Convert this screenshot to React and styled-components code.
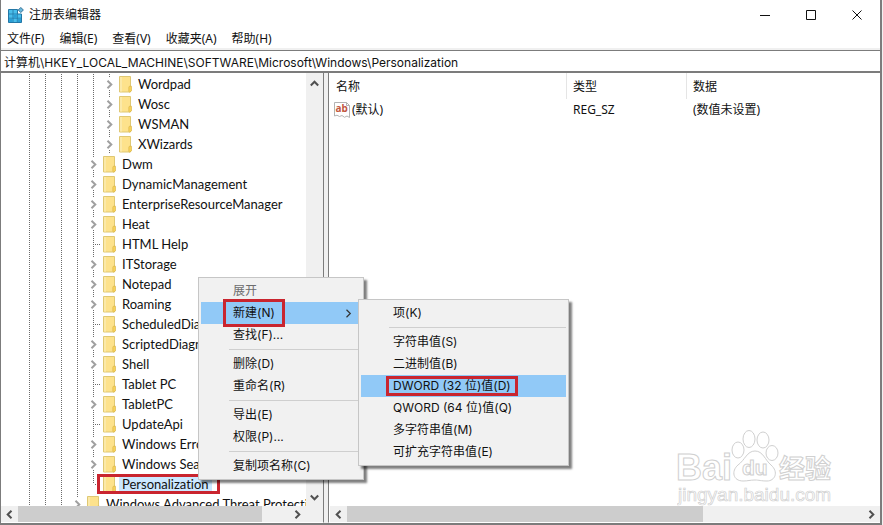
import React from 'react';
import styled, { createGlobalStyle, css } from 'styled-components';

const GlobalStyle = createGlobalStyle`
    * {
        box-sizing: border-box;
    }
    body {
        margin: 0;
        background: #f0f0f0;
        color: #111;
        font-family: 'Noto Sans', 'Noto Sans CJK SC', sans-serif;
        font-size: 12px;
        line-height: 20px;
    }
    button, input {
        font: inherit;
        color: inherit;
        border: 0;
        padding: 0;
        background: none;
    }
`;

const dots = css`
    background: repeating-linear-gradient(#6a6a6a 0 1px, transparent 1px 2px);
`;

const Window = styled.div`
    position: relative;
    display: flex;
    flex-direction: column;
    height: 100vh;
    margin-right: 1px;
    background: #fff;
    border: solid #7c7c7c;
    border-width: 0 2px 2px 1px;
    overflow: hidden;
`;

const TitleBar = styled.header`
    display: flex;
    align-items: center;
    height: 29px;
    padding-left: 7px;
`;

const Title = styled.h1`
    flex: 1;
    margin: 0 0 0 5px;
    font-size: 12px;
    font-weight: 400;
`;

const CaptionButton = styled.button`
    display: flex;
    align-items: center;
    justify-content: center;
    width: 46px;
    height: 29px;
`;

const MenuBar = styled.nav`
    display: flex;
    gap: 15px;
    height: 21px;
    padding-left: 6px;
    border-bottom: 2px solid #f0f0f0;
`;

const MenuBarItem = styled.button`
    line-height: 20px;
    height: 20px;
    white-space: nowrap;
`;

const Address = styled.input`
    flex: none;
    width: 100%;
    height: 23px;
    padding: 0 3px;
    border: solid #7c7c7c;
    border-width: 1px 0 2px;
    outline: none;
    font-family: 'Inter', 'Noto Sans CJK SC', sans-serif;
`;

const Panes = styled.main`
    display: flex;
    flex: 1;
    gap: 4px;
    min-height: 0;
    background: #f0f0f0;
`;

const Pane = styled.section`
    display: flex;
    flex-direction: column;
    background: #fff;
    border-bottom: 1px solid #fff;
    min-height: 0;
    min-width: 0;
`;

const TreePane = styled(Pane)`
    flex: 0 0 323px;
    border-right: 1px solid #7c7c7c;
`;

const ValuePane = styled(Pane)`
    flex: 1;
    border-left: 1px solid #7c7c7c;
    padding-left: 1px;
`;

const TreeArea = styled.div`
    display: flex;
    flex: 1;
    min-height: 0;
`;

const Tree = styled.ul`
    flex: 1;
    margin: 0;
    padding: 1px 0 0 20px;
    list-style: none;
    overflow: hidden;
`;

const TreeRow = styled.li`
    display: flex;
    height: 20px;
    white-space: nowrap;
`;

const Guide = styled.span`
    flex: none;
    width: 16px;
    height: 20px;
    &::before {
        content: '';
        display: block;
        width: 1px;
        height: 100%;
        margin-left: 8px;
        ${dots}
    }
`;

const Branch = styled.span`
    display: flex;
    flex: none;
    align-items: center;
    width: 16px;
    height: 20px;
    &::before {
        content: '';
        width: 1px;
        height: ${(p) => (p.$last ? '10px' : '20px')};
        margin-left: 8px;
        align-self: flex-start;
        ${dots}
    }
    &::after {
        content: '';
        flex: 1;
        height: 1px;
        background: repeating-linear-gradient(90deg, transparent 0 1px, #6a6a6a 1px 2px);
    }
`;

const Expander = styled.button`
    display: flex;
    flex: none;
    flex-direction: column;
    align-items: center;
    justify-content: space-between;
    width: 16px;
    height: 20px;
    &::before,
    &::after {
        content: '';
        width: 1px;
        height: 4px;
        ${dots}
    }
`;

const FolderSlot = styled.span`
    display: flex;
    flex: none;
    align-items: center;
    width: 17px;
    padding-left: 2px;
`;

const TreeLabel = styled.span`
    padding: 0 3px;
    margin-left: 1px;
    font-family: 'Lato', sans-serif;
    font-size: 13px;
    font-variant-ligatures: none;
    background: ${(p) => (p.$selected ? '#cce8ff' : 'transparent')};
`;

const Marked = styled.span`
    position: relative;
    display: flex;
    &::after {
        content: '';
        position: absolute;
        inset: ${(p) => p.$inset};
        border: 3px solid #c9252f;
        pointer-events: none;
    }
`;

const ScrollColumn = styled.div`
    display: flex;
    flex: 0 0 17px;
    flex-direction: column;
    justify-content: space-between;
    padding: 2px 0 1px;
    background: #f0f0f0;
`;

const ScrollRow = styled.div`
    display: flex;
    flex: none;
    height: 16px;
    background: #f0f0f0;
    padding-right: ${(p) => (p.$corner ? '17px' : '0')};
`;

const ScrollTrack = styled.div`
    flex: 1;
`;

const ScrollThumb = styled.div`
    width: ${(p) => p.$size};
    height: 100%;
    background: #cdcdcd;
`;

const ScrollButton = styled.button`
    display: flex;
    flex: none;
    align-items: center;
    justify-content: center;
    width: 17px;
    height: 16px;
`;

const ValueArea = styled.div`
    flex: 1;
    min-height: 0;
`;

const ValueTable = styled.table`
    width: 100%;
    table-layout: fixed;
    border-collapse: separate;
    border-spacing: 0;
`;

const Th = styled.th`
    width: ${(p) => p.$width || 'auto'};
    height: 26px;
    padding: 2px 6px 0;
    font-weight: 400;
    text-align: left;
    border-right: ${(p) => (p.$width ? '1px solid #e5e5e5' : '0')};
`;

const Td = styled.td`
    height: 22px;
    padding: 0 6px;
`;

const ValueName = styled.span`
    display: flex;
    align-items: center;
    gap: 2px;
    margin-left: -2px;
`;

const Popup = styled.ul`
    position: absolute;
    left: ${(p) => p.$left};
    top: ${(p) => p.$top};
    z-index: 1;
    width: max-content;
    min-width: ${(p) => p.$width};
    margin: 0;
    padding: 2px;
    list-style: none;
    background: #f1f1f1;
    border: 1px solid #c6c6c6;
    box-shadow: 3px 3px 2px rgba(0, 0, 0, 0.5);
    font-family: 'Inter', 'Noto Sans CJK SC', sans-serif;
`;

const PopupItem = styled.li`
    position: relative;
`;

const PopupButton = styled.button`
    display: flex;
    align-items: center;
    justify-content: space-between;
    width: 100%;
    height: 22px;
    padding: 0 8px 0 32px;
    background: ${(p) => (p.$active ? '#91c9f7' : 'transparent')};
    &:disabled {
        color: #6d6d6d;
    }
`;

const Divider = styled.li`
    height: 1px;
    margin: 3px 0 3px 28px;
    background: #cfcfcf;
`;

const Watermark = styled.svg`
    position: absolute;
    right: 41px;
    bottom: 14px;
    pointer-events: none;
`;

const Chevron = ({ dir = 'right', color = '#505050', size = 9, weight = 2 }) => {
    const turn = { right: 0, down: 90, left: 180, up: 270 }[dir];
    return (
        <svg width={size} height={size} viewBox="0 0 9 9" fill="none" aria-hidden="true">
            <path d="M2.5 0.8 L6.3 4.5 L2.5 8.2" stroke={color} strokeWidth={weight} transform={`rotate(${turn} 4.5 4.5)`} />
        </svg>
    );
};

const FolderIcon = () => (
    <svg width="14" height="17" viewBox="0 0 14 17" aria-hidden="true">
        <path d="M0.5 0.5 H11.5 V16 H0.5 Z" fill="#fde28c" stroke="#dfc873" />
        <path d="M1 1 H3 V15.5 H1 Z" fill="#fbe9a8" />
        <path d="M9.9 15.6 V11.2 Q9.9 10.2 11 10.2 H12.4 V15 L10.6 16 Z" fill="#fbd75c" stroke="#dcb84e" strokeWidth="0.8" />
    </svg>
);

const AppIcon = () => (
    <svg width="16" height="16" viewBox="0 0 16 16" aria-hidden="true">
        <path d="M0.5 2.5 H9.5 V7 H13.5 V15.5 H0.5 Z" fill="#48bdea" stroke="#2377a6" />
        <path d="M1 7 H9.5 M1 11.2 H13 M5 3 V15 M9.3 7 V15" stroke="#2377a6" strokeWidth="0.8" />
        <path d="M1.2 11.8 H4.4 V15 H1.2 Z M5.6 7.6 H8.8 V10.7 H5.6 Z M9.9 11.8 H13 V15 H9.9 Z" fill="#2a9fd6" />
        <path d="M12.8 0.5 L15.4 3 L12.8 5.5 L10.2 3 Z" fill="#6bb9dc" stroke="#39759a" />
    </svg>
);

const StringIcon = () => (
    <svg width="16" height="16" viewBox="0 0 16 16" aria-hidden="true">
        <path d="M0.5 0.5 H12.5 L15.5 3.5 V15.5 L13 14 L10.5 15.3 L8 13.5 L5.5 14.5 L3 13.2 L0.5 14 Z" fill="#fff" stroke="#b3b3b3" />
        <path d="M12.5 0.5 V3.5 H15.5" fill="none" stroke="#b3b3b3" />
        <text x="1.6" y="10.4" fontSize="10" fontWeight="700" fontFamily="Noto Sans, sans-serif" fill="#c2583f">ab</text>
    </svg>
);

const tree = [
    { name: 'Wordpad', depth: 5, open: true },
    { name: 'Wosc', depth: 5, open: true },
    { name: 'WSMAN', depth: 5, open: true },
    { name: 'XWizards', depth: 5, open: true },
    { name: 'Dwm', depth: 4, open: true },
    { name: 'DynamicManagement', depth: 4, open: true },
    { name: 'EnterpriseResourceManager', depth: 4, open: true },
    { name: 'Heat', depth: 4, open: true },
    { name: 'HTML Help', depth: 4 },
    { name: 'ITStorage', depth: 4, open: true },
    { name: 'Notepad', depth: 4, open: true },
    { name: 'Roaming', depth: 4, open: true },
    { name: 'ScheduledDiagnostics', depth: 4 },
    { name: 'ScriptedDiagnostics', depth: 4, open: true },
    { name: 'Shell', depth: 4, open: true },
    { name: 'Tablet PC', depth: 4 },
    { name: 'TabletPC', depth: 4, open: true },
    { name: 'UpdateApi', depth: 4 },
    { name: 'Windows Error Reporting', depth: 4, open: true },
    { name: 'Windows Search', depth: 4, open: true },
    { name: 'Personalization', depth: 4, selected: true },
    { name: 'Windows Advanced Threat Protection', depth: 3, open: true },
];

const newItems = ['项(K)', null, '字符串值(S)', '二进制值(B)', 'DWORD (32 位)值(D)', 'QWORD (64 位)值(Q)', '多字符串值(M)', '可扩充字符串值(E)'];

const keyItems = ['展开', '新建(N)', '查找(F)...', null, '删除(D)', '重命名(R)', null, '导出(E)', '权限(P)...', null, '复制项名称(C)'];

const TreeNode = ({ node }) => {
    const body = (
        <>
            <FolderSlot>
                <FolderIcon />
            </FolderSlot>
            <TreeLabel $selected={node.selected}>{node.name}</TreeLabel>
        </>
    );
    return (
        <TreeRow>
            {Array.from({ length: node.depth }, (_, i) => (
                <Guide key={i} />
            ))}
            {node.open ? (
                <Expander aria-label={node.name}>
                    <Chevron color="#a0a0a0" />
                </Expander>
            ) : (
                <Branch $last={node.selected} />
            )}
            {node.selected ? <Marked $inset="0 -8px 0 -4px">{body}</Marked> : body}
        </TreeRow>
    );
};

const NewMenu = () => (
    <Popup $left="157px" $top="-3px" $width="211px">
        {newItems.map((label, i) =>
            label ? (
                <PopupItem key={i}>
                    <PopupButton $active={i === 4}>{i === 4 ? <Marked $inset="0 -7px">{label}</Marked> : label}</PopupButton>
                </PopupItem>
            ) : (
                <Divider key={i} />
            )
        )}
    </Popup>
);

const KeyMenu = () => (
    <Popup $left="197px" $top="277px" $width="166px">
        {keyItems.map((label, i) =>
            label ? (
                <PopupItem key={i}>
                    <PopupButton $active={i === 1} disabled={i === 0}>
                        {i === 1 ? <Marked $inset="-4px -10px">{label}</Marked> : label}
                        {i === 1 && <Chevron color="#333" weight={1.2} />}
                    </PopupButton>
                    {i === 1 && <NewMenu />}
                </PopupItem>
            ) : (
                <Divider key={i} />
            )
        )}
    </Popup>
);

const HorizontalScroll = ({ size, corner }) => (
    <ScrollRow $corner={corner}>
        <ScrollButton aria-label="向左">
            <Chevron dir="left" />
        </ScrollButton>
        <ScrollTrack>
            <ScrollThumb $size={size} />
        </ScrollTrack>
        <ScrollButton aria-label="向右">
            <Chevron />
        </ScrollButton>
    </ScrollRow>
);

const BaiduMark = () => (
    <Watermark width="162" height="80" viewBox="0 0 162 80" fill="#fff" stroke="#d0d0d0" fontFamily="Liberation Sans, Noto Sans CJK SC, sans-serif">
        <text x="-1" y="51" fontSize="36" fontWeight="700">Bai</text>
        <ellipse cx="61" cy="21" rx="6" ry="8" />
        <ellipse cx="72" cy="10" rx="6" ry="8.5" />
        <ellipse cx="86" cy="11" rx="6" ry="8" />
        <ellipse cx="95" cy="24" rx="6" ry="7.5" />
        <path d="M78 22 C86 22 88 31 94 36 C102 43 98 52 90 52 C84 52 82 51 78 51 C73 51 71 52 66 52 C56 52 54 42 61 36 C68 31 70 22 78 22 Z" />
        <text x="65" y="46" fontSize="21" fontWeight="700">du</text>
        <text x="102" y="49" fontSize="26" fontWeight="700">经验</text>
        <text x="1" y="72" fontSize="19" strokeWidth="0.7">jingyan.baidu.com</text>
    </Watermark>
);

const App = () => {
    return (
        <>
            <GlobalStyle />
            <Window>
                <TitleBar>
                    <AppIcon />
                    <Title>注册表编辑器</Title>
                    <CaptionButton aria-label="最小化">
                        <svg width="10" height="10"><path d="M0 5.5 H10" stroke="#111" /></svg>
                    </CaptionButton>
                    <CaptionButton aria-label="最大化">
                        <svg width="10" height="10"><path d="M0.5 0.5 H9.5 V9.5 H0.5 Z" fill="none" stroke="#111" /></svg>
                    </CaptionButton>
                    <CaptionButton aria-label="关闭">
                        <svg width="10" height="10"><path d="M0.5 0.5 L9.5 9.5 M9.5 0.5 L0.5 9.5" stroke="#111" /></svg>
                    </CaptionButton>
                </TitleBar>
                <MenuBar>
                    {['文件(F)', '编辑(E)', '查看(V)', '收藏夹(A)', '帮助(H)'].map((label) => (
                        <MenuBarItem key={label}>{label}</MenuBarItem>
                    ))}
                </MenuBar>
                <Address aria-label="地址" defaultValue="计算机\HKEY_LOCAL_MACHINE\SOFTWARE\Microsoft\Windows\Personalization" />
                <Panes>
                    <TreePane>
                        <TreeArea>
                            <Tree>
                                {tree.map((node) => (
                                    <TreeNode key={node.name} node={node} />
                                ))}
                            </Tree>
                            <ScrollColumn>
                                <ScrollButton aria-label="向上">
                                    <Chevron dir="up" />
                                </ScrollButton>
                                <ScrollButton aria-label="向下">
                                    <Chevron dir="down" />
                                </ScrollButton>
                            </ScrollColumn>
                        </TreeArea>
                        <HorizontalScroll size="90%" corner />
                    </TreePane>
                    <ValuePane>
                        <ValueArea>
                            <ValueTable>
                                <thead>
                                    <tr>
                                        <Th $width="237px">名称</Th>
                                        <Th $width="120px">类型</Th>
                                        <Th>数据</Th>
                                    </tr>
                                </thead>
                                <tbody>
                                    <tr>
                                        <Td>
                                            <ValueName>
                                                <StringIcon />
                                                (默认)
                                            </ValueName>
                                        </Td>
                                        <Td>REG_SZ</Td>
                                        <Td>(数值未设置)</Td>
                                    </tr>
                                </tbody>
                            </ValueTable>
                        </ValueArea>
                        <HorizontalScroll size="69%" />
                    </ValuePane>
                </Panes>
                <KeyMenu />
                <BaiduMark />
            </Window>
        </>
    );
};

export default App;
